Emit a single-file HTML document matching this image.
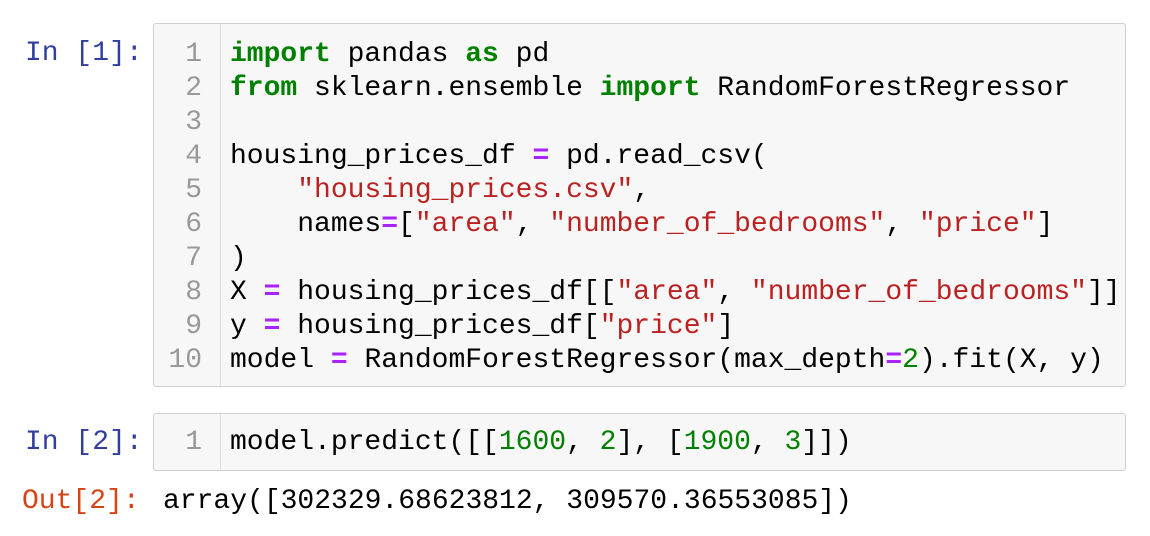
<!DOCTYPE html>
<html><head><style>
body{margin:0;width:1150px;height:536px;background:#fff;position:relative;overflow:hidden;font-family:"Liberation Mono",monospace;font-size:28px;}
.p{position:absolute;height:34px;line-height:34px;white-space:pre;}
.in{color:#303F9F;left:25px}
.out{color:#D84315;left:22px}
.box{position:absolute;left:153px;width:971px;background:#f7f7f7;border:1px solid #cfcfcf;border-radius:3px}
.gut{position:absolute;left:0;top:0;bottom:0;width:66px;border-right:1px solid #ddd}
.n{position:absolute;width:48px;text-align:right;left:0;color:#999}
.c{position:absolute;left:76px;color:#000}
.k{color:#008000;font-weight:bold}
.s{color:#BA2121}
.o{color:#AA22FF;font-weight:bold}
.m{color:#008000}
</style></head><body>
<div class="p in" style="top:37px">In [1]:</div>
<div class="box" style="top:23px;height:362px">
<div class="gut"></div>
<div class="p n" style="top:14px">1</div><div class="p c" style="top:14px"><span class="k">import</span> pandas <span class="k">as</span> pd</div>
<div class="p n" style="top:48px">2</div><div class="p c" style="top:48px"><span class="k">from</span> sklearn.ensemble <span class="k">import</span> RandomForestRegressor</div>
<div class="p n" style="top:82px">3</div>
<div class="p n" style="top:116px">4</div><div class="p c" style="top:116px">housing_prices_df <span class="o">=</span> pd.read_csv(</div>
<div class="p n" style="top:150px">5</div><div class="p c" style="top:150px">    <span class="s">"housing_prices.csv"</span>,</div>
<div class="p n" style="top:184px">6</div><div class="p c" style="top:184px">    names<span class="o">=</span>[<span class="s">"area"</span>, <span class="s">"number_of_bedrooms"</span>, <span class="s">"price"</span>]</div>
<div class="p n" style="top:218px">7</div><div class="p c" style="top:218px">)</div>
<div class="p n" style="top:252px">8</div><div class="p c" style="top:252px">X <span class="o">=</span> housing_prices_df[[<span class="s">"area"</span>, <span class="s">"number_of_bedrooms"</span>]]</div>
<div class="p n" style="top:286px">9</div><div class="p c" style="top:286px">y <span class="o">=</span> housing_prices_df[<span class="s">"price"</span>]</div>
<div class="p n" style="top:320px">10</div><div class="p c" style="top:320px">model <span class="o">=</span> RandomForestRegressor(max_depth<span class="o">=</span><span class="m">2</span>).fit(X, y)</div>
</div>
<div class="p in" style="top:426px">In [2]:</div>
<div class="box" style="top:413px;height:56px">
<div class="gut"></div>
<div class="p n" style="top:12px">1</div><div class="p c" style="top:12px">model.predict([[<span class="m">1600</span>, <span class="m">2</span>], [<span class="m">1900</span>, <span class="m">3</span>]])</div>
</div>
<div class="p out" style="top:485px">Out[2]:</div>
<div class="p" style="top:485px;left:163px">array([302329.68623812, 309570.36553085])</div>
</body></html>
